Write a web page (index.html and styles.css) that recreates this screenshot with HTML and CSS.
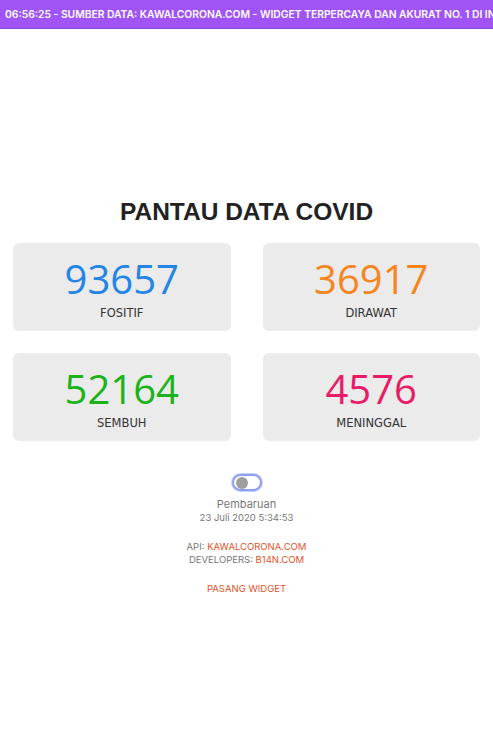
FILE: index.html
```html
<!DOCTYPE html>
<html lang="id">
<head>
<meta charset="utf-8">
<title>Pantau Data Covid</title>
<link rel="stylesheet" href="styles.css">
</head>
<body>
<div class="ticker"><span class="ticker-text">06:56:25 - SUMBER DATA: KAWALCORONA.COM - WIDGET TERPERCAYA DAN AKURAT NO. 1 DI INDONESIA</span></div>
<main class="main">
  <h1 class="title">PANTAU DATA COVID</h1>
  <div class="grid">
    <div class="card"><div class="num blue">93657</div><div class="label">FOSITIF</div></div>
    <div class="card"><div class="num orange">36917</div><div class="label">DIRAWAT</div></div>
    <div class="card"><div class="num green">52164</div><div class="label">SEMBUH</div></div>
    <div class="card"><div class="num pink">4576</div><div class="label">MENINGGAL</div></div>
  </div>
  <div class="info">
    <div class="toggle"><span class="knob"></span></div>
    <div class="upd">Pembaruan</div>
    <div class="date">23 Juli 2020 5:34:53</div>
    <div class="credits">
      <div>API: <a class="link">KAWALCORONA.COM</a></div>
      <div>DEVELOPERS: <a class="link">B14N.COM</a></div>
    </div>
    <div class="pasang"><a class="link">PASANG WIDGET</a></div>
  </div>
</main>
</body>
</html>
```
FILE: styles.css
```css
html, body { margin: 0; padding: 0; background: #fff; }
body { font-family: "Open Sans", "Liberation Sans", sans-serif; color: #333; }
.ticker {
  height: 28px; line-height: 28px; background: #a054f5; color: #fff;
  font-family: "Inter", "Liberation Sans", sans-serif; font-weight: 600; font-size: 10.3px;
  white-space: nowrap; overflow: hidden; padding-left: 5px;
  border-bottom: 1px solid #8a46dc;
}
.ticker-text { display: inline-block; }
.main { padding: 168px 13px 0; }
.title {
  margin: 0 0 16px; text-align: center; font-family: "Liberation Sans", Arial, sans-serif;
  font-weight: 700; font-size: 24.5px; line-height: 30px; color: #222;
}
.grid { display: grid; grid-template-columns: 1fr 1fr; column-gap: 32px; row-gap: 22px; }
.card {
  background: #ebebeb; border-radius: 6px; height: 88px;
  display: flex; flex-direction: column; align-items: center; padding-top: 13px; box-sizing: border-box;
}
.num { font-family: "Open Sans", sans-serif; font-size: 40px; line-height: 46px; }
.label { font-family: "DejaVu Sans", sans-serif; font-size: 11.5px; color: #333; margin-top: 4px; }
.blue { color: #2385e6; }
.orange { color: #f6851f; }
.green { color: #1bb319; }
.pink { color: #ea1b66; }
.info { display: flex; flex-direction: column; align-items: center; margin-top: 33px; }
.toggle {
  width: 22px; height: 13px; border-radius: 9px; background: #fff; border: 2px solid #8fa0f0;
  box-shadow: 0 0 0 1px #c9d0fa; display: flex; align-items: center; padding: 0 2px; box-sizing: content-box;
}
.knob { width: 12px; height: 12px; border-radius: 50%; background: #9e9e9e; }
.upd { font-family: "Inter", sans-serif; font-size: 11px; color: #777; margin-top: 6px; line-height: 14px; }
.date { font-family: "Inter", sans-serif; font-size: 9.5px; color: #777; line-height: 13px; }
.credits { font-family: "Inter", sans-serif; font-size: 9.5px; color: #777; line-height: 13px; margin-top: 16px; text-align: center; }
.link { color: #e0532a; text-decoration: none; }
.pasang { font-family: "Inter", sans-serif; font-size: 9.5px; line-height: 13px; margin-top: 16px; }
```
